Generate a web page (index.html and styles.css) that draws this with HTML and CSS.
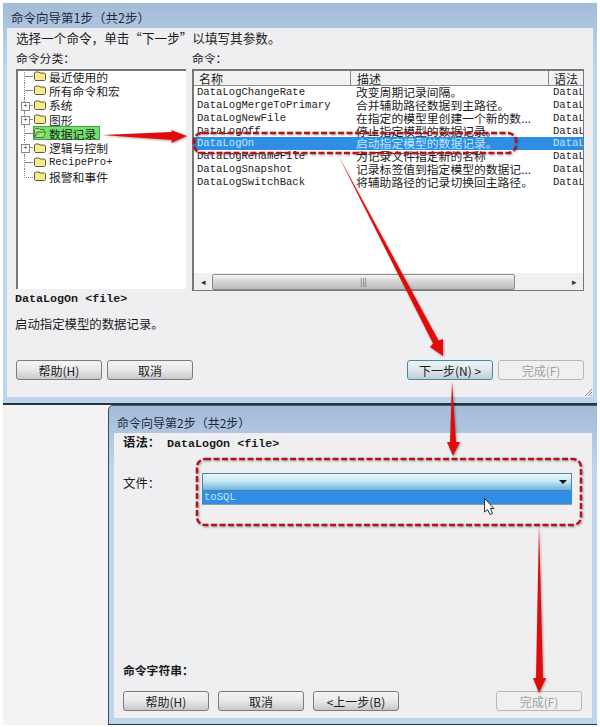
FILE: index.html
```html
<!DOCTYPE html>
<html lang="zh-CN">
<head>
  <meta charset="UTF-8" />
  <title>命令向导</title>
  <link rel="stylesheet" href="styles.css">
</head>
<body>
  <svg class="defs" width="0" height="0">
    <symbol id="folder" viewBox="0 0 12 10">
      <path d="M0.5 8.5V2L1.5 1H5L6 2H10.5L11.5 3V8.5L10.5 9.5H1.5Z" fill="#f7ec8c" stroke="#5c5a3c" />
    </symbol>
    <symbol id="folder-open" viewBox="0 0 12 10">
      <path d="M0.5 9.5V1.5L1.5 0.5H5L6 1.5H10V4H3L0.5 9.5H9.5L11.5 4H10" fill="#9fe878" stroke="#4c7a40" />
    </symbol>
  </svg>

  <div class="page">
    <section class="dialog first">
      <div class="title">命令向导第1步（共2步）</div>
      <div class="client">
        <p class="hint">选择一个命令，单击“下一步”以填写其参数。</p>
        <div class="panes">
          <div class="pane pane-tree">
            <div class="pane-label">命令分类：</div>
            <ul class="tree">
              <li><span class="twist"></span><svg class="icon"><use href="#folder" /></svg>最近使用的</li>
              <li><span class="twist"></span><svg class="icon"><use href="#folder" /></svg>所有命令和宏</li>
              <li><span class="twist plus"></span><svg class="icon"><use href="#folder" /></svg>系统</li>
              <li><span class="twist plus"></span><svg class="icon"><use href="#folder" /></svg>图形</li>
              <li class="picked"><span class="twist"></span><span class="picked-box"><svg class="icon"><use href="#folder-open" /></svg>数据记录</span></li>
              <li><span class="twist plus"></span><svg class="icon"><use href="#folder" /></svg>逻辑与控制</li>
              <li><span class="twist"></span><svg class="icon"><use href="#folder" /></svg><span class="mono">RecipePro+</span></li>
              <li class="last"><span class="twist"></span><svg class="icon"><use href="#folder" /></svg>报警和事件</li>
            </ul>
          </div>
          <div class="pane pane-list">
            <div class="pane-label">命令：</div>
            <div class="list">
              <div class="list-head row">
                <span class="col-name">名称</span>
                <span class="col-desc">描述</span>
                <span class="col-syntax">语法</span>
              </div>
              <div class="list-body">
                <div class="row"><span class="col-name mono">DataLogChangeRate</span><span class="col-desc">改变周期记录间隔。</span><span class="col-syntax mono">DataL</span></div>
                <div class="row"><span class="col-name mono">DataLogMergeToPrimary</span><span class="col-desc">合并辅助路径数据到主路径。</span><span class="col-syntax mono">DataL</span></div>
                <div class="row"><span class="col-name mono">DataLogNewFile</span><span class="col-desc">在指定的模型里创建一个新的数...</span><span class="col-syntax mono">DataL</span></div>
                <div class="row"><span class="col-name mono">DataLogOff</span><span class="col-desc">停止指定模型的数据记录。</span><span class="col-syntax mono">DataL</span></div>
                <div class="row selected"><span class="col-name mono">DataLogOn</span><span class="col-desc">启动指定模型的数据记录。</span><span class="col-syntax mono">DataL</span></div>
                <div class="row"><span class="col-name mono">DataLogRenameFile</span><span class="col-desc">为记录文件指定新的名称</span><span class="col-syntax mono">DataL</span></div>
                <div class="row"><span class="col-name mono">DataLogSnapshot</span><span class="col-desc">记录标签值到指定模型的数据记...</span><span class="col-syntax mono">DataL</span></div>
                <div class="row"><span class="col-name mono">DataLogSwitchBack</span><span class="col-desc">将辅助路径的记录切换回主路径。</span><span class="col-syntax mono">DataL</span></div>
              </div>
              <div class="scrollbar">
                <span class="scroll-btn">◂</span>
                <span class="scroll-thumb">|||</span>
                <span class="scroll-btn">▸</span>
              </div>
            </div>
          </div>
        </div>
        <div class="syntax mono">DataLogOn &lt;file&gt;</div>
        <p class="summary">启动指定模型的数据记录。</p>
        <div class="buttons">
          <button class="btn">帮助(H)</button>
          <button class="btn">取消</button>
          <span class="spacer"></span>
          <button class="btn default">下一步(N) &gt;</button>
          <button class="btn off">完成(F)</button>
        </div>
      </div>
    </section>

    <div class="lower">
      <section class="dialog second">
        <div class="title">命令向导第2步（共2步）</div>
        <div class="client">
          <div class="syntax-line">语法： <span class="mono">DataLogOn &lt;file&gt;</span></div>
          <div class="file-row">
            <span class="file-label">文件：</span>
            <div class="combo-wrap">
              <div class="combo"><span class="combo-arrow"></span></div>
              <div class="combo-drop mono">toSQL</div>
            </div>
          </div>
          <div class="cmd-string">命令字符串：</div>
          <div class="buttons">
            <button class="btn">帮助(H)</button>
            <button class="btn">取消</button>
            <button class="btn">&lt;上一步(B)</button>
            <span class="spacer"></span>
            <button class="btn off">完成(F)</button>
          </div>
        </div>
      </section>
    </div>

    <!-- annotations drawn over the screenshots -->
    <svg class="marks" width="600" height="727" viewBox="0 0 600 727">
      <path class="grip" d="M585 396L592 389M588 396L592 392M590.500 396L592 394.500" />
      <g class="arrows">
        <g fill="none" stroke="#b5121f" stroke-width="2.500" stroke-dasharray="6 2.500">
          <rect x="194" y="133" width="322" height="20" rx="8" />
          <rect x="197" y="459" width="384" height="66" rx="8" />
        </g>
        <g fill="#e20a0a">
          <polygon points="102,135 172,132 171,130 187,136 171,143 172,140" />
          <polygon points="338,155 438.500,340.500 443,339 443,356 430,347 433,343.500" />
          <polygon points="452,381 456,442 460,442 453,456 447,442 450,442" />
          <polygon points="539,525 543,678 546,678 539,693 533,678 536,678" />
        </g>
      </g>
      <path d="M484.500 498.500V512L487.500 509.500L490 514.500L492.500 513.500L490.500 508.500H494Z" fill="#fff" stroke="#333" />
    </svg>
  </div>
</body>
</html>
```

FILE: styles.css
```css
* {
  box-sizing: border-box;
  margin: 0;
  padding: 0;
}

body {
  background: #fff;
  font-family: "Noto Sans CJK SC", "Liberation Sans", sans-serif;
  font-size: 11.8px;
  color: #1c1c1c;
}

.defs {
  position: absolute;
}

.page {
  position: relative;
  width: 600px;
  height: 727px;
  overflow: hidden;
  padding-top: 3px;
}

.mono {
  font-family: "Liberation Mono", monospace;
  font-size: 10.6px;
}

.marks {
  position: absolute;
  top: 0;
  left: 0;
}

.arrows {
  filter: drop-shadow(1px 1px 1px rgba(0, 0, 0, 0.35));
}

.grip {
  fill: none;
  stroke: #8c8c8c;
}

/* dialogs */
.dialog {
  display: flex;
  flex-direction: column;
  background: linear-gradient(#a4bbd8, #bcd4ee 60px);
}

.first {
  width: 594px;
  height: 402px;
  margin-left: 3px;
  padding: 0 4px 6px;
  border-bottom: 2px solid #26343c;
}

.lower {
  width: 594px;
  height: 320px;
  margin-left: 3px;
  padding-left: 105px;
  background: #f3f3f3;
}

.second {
  width: 489px;
  height: 320px;
  padding: 0 5px 6px 5px;
  border-top: 1px solid #4a5a66;
  border-left: 1px solid #3c4a52;
  border-bottom: 1px solid #26343c;
  border-radius: 5px 0 0 0;
}

.title {
  height: 25px;
  padding: 7px 0 0 4px;
  font-size: 12.5px;
  line-height: 16px;
  color: #1c2a38;
}

.second .title {
  height: 27px;
  padding: 9px 0 0 3px;
  font-size: 12px;
}

.client {
  flex: 1;
  display: flex;
  flex-direction: column;
  background: #efeff1;
}

.first .client {
  padding: 2px 9px 17px 9px;
}

.second .client {
  padding: 1px 10px 7px 9px;
}

.hint {
  font-size: 12.6px;
  line-height: 16px;
}

/* panes */
.panes {
  display: flex;
  gap: 6px;
  margin-top: 6px;
}

.pane-label {
  height: 17px;
  line-height: 11px;
}

.pane-tree {
  width: 171px;
}

.pane-list {
  width: 392px;
}

.tree {
  list-style: none;
  height: 220px;
  background: #fff;
  border-top: 2px solid #777;
  border-left: 2px solid #777;
}

.tree li {
  display: flex;
  align-items: center;
  height: 14.3px;
  white-space: nowrap;
}

.tree li:first-child {
  margin-top: -2px;
}

.twist {
  width: 15px;
  height: 100%;
  margin-right: 1px;
  flex: none;
  position: relative;
}

/* dotted tree lines */
.twist::before {
  content: "";
  position: absolute;
  left: 6px;
  right: 0;
  top: 0;
  height: 8px;
  border-left: 1px dotted #888;
  border-bottom: 1px dotted #888;
}

.tree li:not(.last) .twist::before {
  height: 100%;
  border-bottom: none;
  background: linear-gradient(#888, #888) no-repeat 0 7px / 100% 1px;
}

.twist.plus::after {
  content: "+";
  position: absolute;
  left: 3px;
  top: 4px;
  width: 7px;
  height: 7px;
  border: 1px solid #888;
  background: #fff;
  font-size: 7px;
  line-height: 5px;
  text-align: center;
}

.icon {
  width: 12px;
  height: 10px;
  margin-right: 3px;
  flex: none;
}

.picked-box {
  display: flex;
  align-items: center;
  height: 14px;
  margin-left: -1px;
  padding-right: 3px;
  background: #72e26a;
  border: 1px solid #4aa04a;
}

.list {
  height: 222px;
  display: flex;
  flex-direction: column;
  background: #fff;
  border: 1px solid #777;
  border-top-width: 2px;
  border-left-width: 2px;
}

.row {
  display: flex;
  height: 12.75px;
  align-items: center;
  line-height: 12px;
  white-space: nowrap;
}

.col-name {
  width: 156px;
  padding-left: 3px;
  flex: none;
}

.col-desc {
  width: 198px;
  padding-left: 6px;
  flex: none;
}

.col-syntax {
  flex: 1;
  padding-left: 5px;
  overflow: hidden;
}

.list-head {
  height: 15px;
  background: #f2f2f2;
  border-bottom: 1px solid #8a8a8a;
  font-size: 12px;
}

.list-head .col-name {
  padding-left: 5px;
}

.list-head span {
  height: 100%;
  line-height: 15px;
}

.list-head .col-desc,
.list-head .col-syntax {
  border-left: 1px solid #8a8a8a;
}

.list-body {
  flex: 1;
}

.selected {
  background: #2f8ee4;
  color: #bfe6ff;
}

.scrollbar {
  height: 17px;
  display: flex;
  align-items: center;
  background: #f0f0f0;
}

.scroll-btn {
  width: 18px;
  text-align: center;
  font-size: 9px;
  color: #333;
  flex: none;
}

.scroll-thumb {
  width: 303px;
  height: 16px;
  margin-right: auto;
  background: linear-gradient(#f4f4f4, #d4d4d4 50%, #bcbcbc);
  border: 1px solid #8c8c8c;
  border-radius: 2px;
  text-align: center;
  font-size: 8px;
  line-height: 14px;
  color: #555;
}

.syntax {
  height: 16px;
  line-height: 16px;
  font-size: 11.7px;
  font-weight: bold;
  margin-left: -1px;
}

.summary {
  margin-top: 9px;
  font-size: 12.4px;
  line-height: 16px;
  margin-left: -1px;
}

/* buttons */
.buttons {
  display: flex;
  gap: 5px;
  margin-top: auto;
}

.second .buttons {
  gap: 9px;
}

.spacer {
  flex: 1;
}

.btn {
  width: 86px;
  height: 20px;
  background: linear-gradient(#f4f4f4, #e8e8e8 50%, #c8c8c8);
  border: 1px solid #7c7c7c;
  border-radius: 3px;
  font-family: inherit;
  font-size: 12px;
  color: #222;
}

.btn.default {
  background: linear-gradient(#eef3f6, #dfe6ea 50%, #c4ccd2);
  border-color: #3c8ea8;
}

.btn.off {
  background: #f0f0f0;
  border-color: #b8b8b8;
  color: #a0a0a0;
}

/* second dialog */
.syntax-line {
  height: 16px;
  line-height: 16px;
  font-size: 12.4px;
  font-weight: bold;
}

.syntax-line .mono {
  margin-left: 4px;
  font-size: 11.7px;
}

.file-row {
  display: flex;
  margin-top: 23px;
}

.file-label {
  width: 79px;
  line-height: 20px;
  font-size: 12.4px;
}

.combo-wrap {
  width: 370px;
}

.combo {
  height: 18px;
  background: linear-gradient(#e8f6fa, #c6e8f4 45%, #6cb4de);
  border: 1px solid #5a7f96;
  display: flex;
  align-items: center;
  justify-content: flex-end;
  padding-right: 4px;
}

.combo-arrow {
  border-left: 4px solid transparent;
  border-right: 4px solid transparent;
  border-top: 4px solid #111;
}

.combo-drop {
  height: 14px;
  padding-left: 2px;
  line-height: 13px;
  background: #2f8ee4;
  color: #bfe6ff;
  border-bottom: 1px solid #8aa0ae;
}

.cmd-string {
  margin-top: auto;
  margin-bottom: 13px;
  font-weight: bold;
}

.cmd-string + .buttons {
  margin-top: 0;
}
```
